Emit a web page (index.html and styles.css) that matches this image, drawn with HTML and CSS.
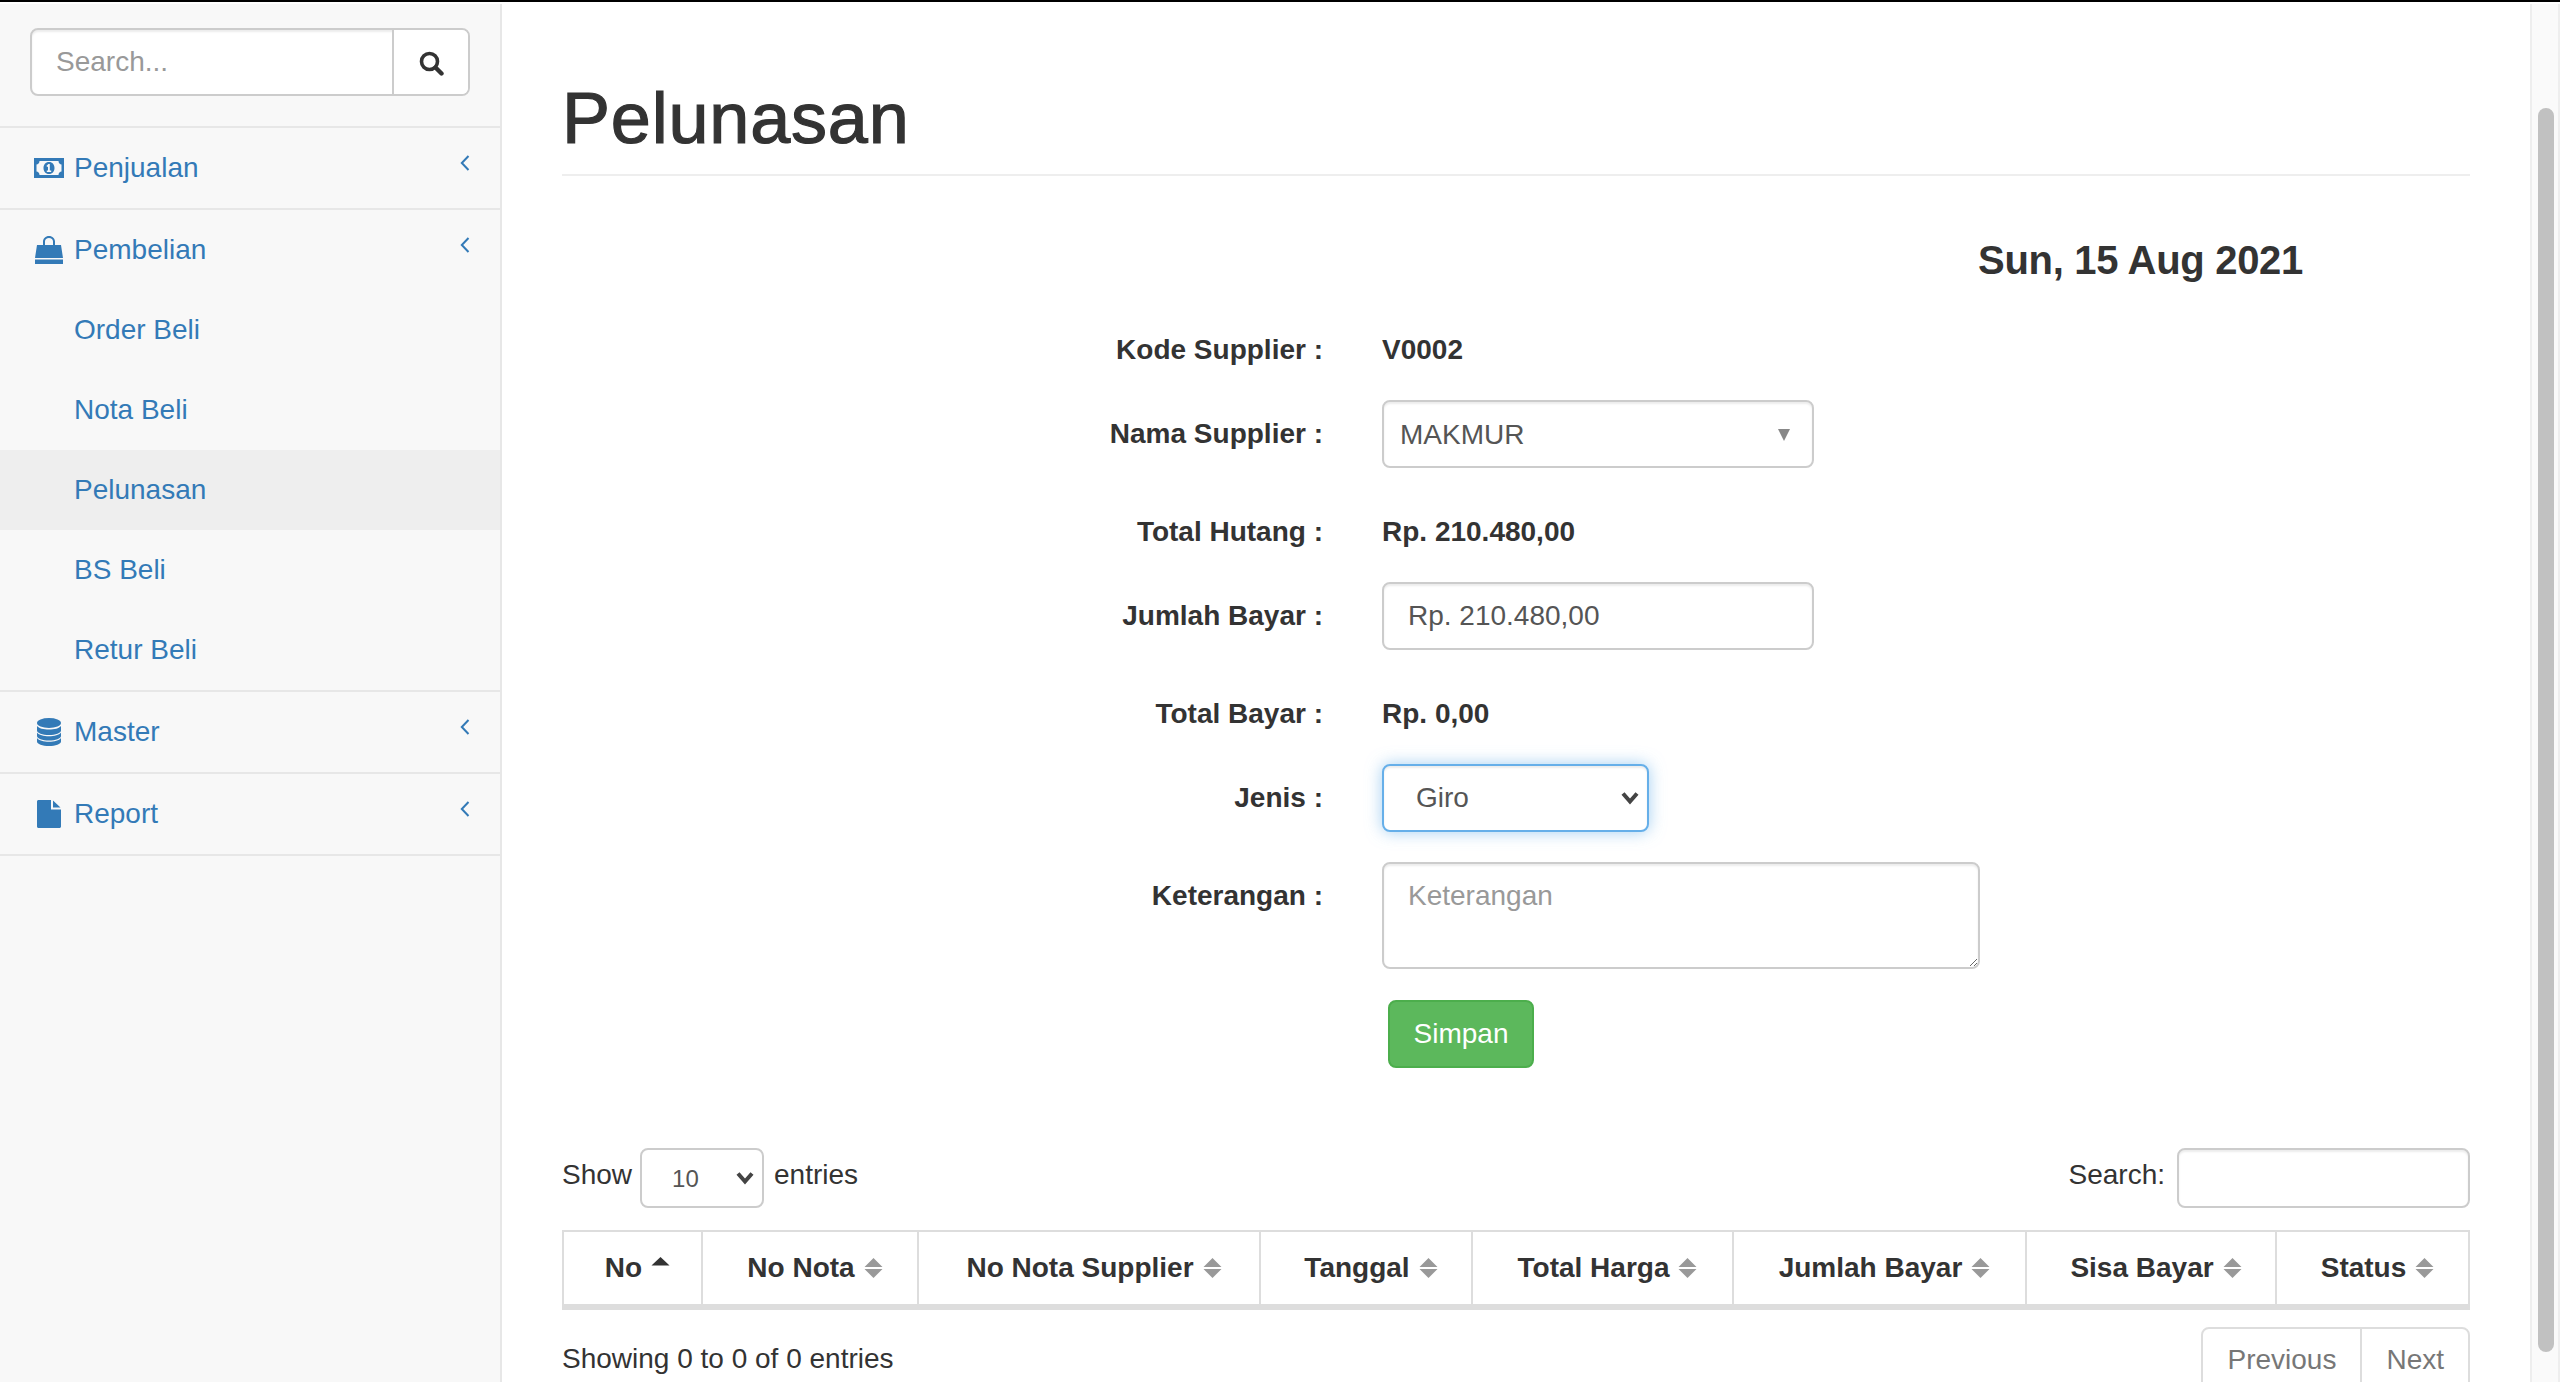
FILE: index.html
```html
<!DOCTYPE html>
<html lang="id">
<head>
    <meta charset="UTF-8">
    <meta name="viewport" content="width=device-width, initial-scale=1.0">
    <title>Pelunasan</title>
    <link rel="stylesheet" href="styles.css">
</head>
<body>
    <div class="wrapper">
        <aside class="sidebar">
            <div class="sidebar-search">
                <div class="search-group">
                    <input type="text" class="search-input" placeholder="Search...">
                    <button type="button" class="search-btn" aria-label="Search">
                        <svg width="26" height="26" viewBox="0 0 26 26"><circle cx="11.5" cy="11.5" r="8" fill="none" stroke="#333" stroke-width="3.6"/><path d="M17.5 17.5L23.5 23.5" stroke="#333" stroke-width="4.4" stroke-linecap="round"/></svg>
                    </button>
                </div>
            </div>
            <ul class="nav">
                <li class="nav-item">
                    <a class="nav-link">
                        <span class="nav-icon">
                            <svg width="30" height="20" viewBox="0 0 30 20"><path fill="#337ab7" fill-rule="evenodd" d="M0 0H30V20H0ZM5.5 3C5.5 5 4 6.5 2.5 6.5V13.500C4 13.500 5.500 15 5.500 17H24.500C24.500 15 26 13.500 27.500 13.500V6.500C26 6.500 24.500 5 24.500 3ZM15 4C18.500 4 20.500 6.700 20.500 10S18.500 16 15 16 9.500 13.300 9.500 10 11.500 4 15 4ZM15.800 6H14.400L12.400 8 13.400 9 14 8.400V12.500H12.800V14H17.200V12.500H15.800Z"/></svg>
                        </span>
                        <span class="nav-text">Penjualan</span>
                        <svg class="nav-arrow" width="10" height="16" viewBox="0 0 10 16"><path d="M8.500 1L1.800 8L8.500 15" fill="none" stroke="#337ab7" stroke-width="2"/></svg>
                    </a>
                </li>
                <li class="nav-item">
                    <a class="nav-link">
                        <span class="nav-icon">
                            <svg width="28" height="28" viewBox="0 0 28 28"><path fill="#337ab7" d="M2 9H8V5.500C8 2.500 10.500 0 14 0S20 2.500 20 5.500V9H26L28 22H0ZM10 9H18V5.500C18 3.500 16.300 2 14 2S10 3.500 10 5.500ZM0 23.500H28V28H0Z"/></svg>
                        </span>
                        <span class="nav-text">Pembelian</span>
                        <svg class="nav-arrow" width="10" height="16" viewBox="0 0 10 16"><path d="M8.500 1L1.800 8L8.500 15" fill="none" stroke="#337ab7" stroke-width="2"/></svg>
                    </a>
                    <ul class="subnav">
                        <li><a class="sub-link">Order Beli</a></li>
                        <li><a class="sub-link">Nota Beli</a></li>
                        <li><a class="sub-link active">Pelunasan</a></li>
                        <li><a class="sub-link">BS Beli</a></li>
                        <li><a class="sub-link">Retur Beli</a></li>
                    </ul>
                </li>
                <li class="nav-item">
                    <a class="nav-link">
                        <span class="nav-icon">
                            <svg width="24" height="28" viewBox="0 0 24 28"><ellipse cx="12" cy="5" rx="12" ry="5" fill="#337ab7"/><path fill="#337ab7" d="M0 8C2 10.500 6.500 11.500 12 11.500S22 10.500 24 8V12.500C24 15 18.500 17 12 17S0 15 0 12.500ZM0 14.500C2 17 6.500 18.200 12 18.200S22 17 24 14.500V18C24 20.500 18.500 22.500 12 22.500S0 20.500 0 18ZM0 20C2 22.500 6.500 23.800 12 23.800S22 22.500 24 20V23.500C24 26 18.500 28 12 28S0 26 0 23.500Z"/></svg>
                        </span>
                        <span class="nav-text">Master</span>
                        <svg class="nav-arrow" width="10" height="16" viewBox="0 0 10 16"><path d="M8.500 1L1.800 8L8.500 15" fill="none" stroke="#337ab7" stroke-width="2"/></svg>
                    </a>
                </li>
                <li class="nav-item">
                    <a class="nav-link">
                        <span class="nav-icon">
                            <svg width="24" height="28" viewBox="0 0 24 28"><path fill="#337ab7" d="M1.500 0H14V9.500H24V26.500C24 27.400 23.300 28 22.500 28H1.500C.7 28 0 27.400 0 26.500V1.500C0 .7.7 0 1.500 0ZM16 .5L23.500 7.500H16Z"/></svg>
                        </span>
                        <span class="nav-text">Report</span>
                        <svg class="nav-arrow" width="10" height="16" viewBox="0 0 10 16"><path d="M8.500 1L1.800 8L8.500 15" fill="none" stroke="#337ab7" stroke-width="2"/></svg>
                    </a>
                </li>
            </ul>
        </aside>

        <main class="page">
            <h1 class="page-header">Pelunasan</h1>
            <div class="date-row">Sun, 15 Aug 2021</div>

            <form class="pay-form">
                <div class="form-row form-row-static">
                    <label class="form-label">Kode Supplier :</label>
                    <div class="form-value">V0002</div>
                </div>
                <div class="form-row">
                    <label class="form-label">Nama Supplier :</label>
                    <div class="fake-select">
                        <span>MAKMUR</span>
                        <span class="fake-caret"></span>
                    </div>
                </div>
                <div class="form-row form-row-static">
                    <label class="form-label">Total Hutang :</label>
                    <div class="form-value">Rp. 210.480,00</div>
                </div>
                <div class="form-row">
                    <label class="form-label">Jumlah Bayar :</label>
                    <input type="text" class="form-control input-bayar" value="Rp. 210.480,00">
                </div>
                <div class="form-row form-row-static">
                    <label class="form-label">Total Bayar :</label>
                    <div class="form-value">Rp. 0,00</div>
                </div>
                <div class="form-row">
                    <label class="form-label">Jenis :</label>
                    <select class="form-control select-jenis">
                        <option>Giro</option>
                        <option>Tunai</option>
                    </select>
                </div>
                <div class="form-row form-row-text">
                    <label class="form-label">Keterangan :</label>
                    <textarea class="form-control text-keterangan" placeholder="Keterangan"></textarea>
                </div>
                <div class="form-row form-row-btn">
                    <button type="button" class="btn-simpan">Simpan</button>
                </div>
            </form>

            <div class="dt-top">
                <div class="dt-length">
                    <span>Show</span>
                    <select class="dt-select">
                        <option>10</option>
                        <option>25</option>
                    </select>
                    <span>entries</span>
                </div>
                <div class="dt-search">
                    <span>Search:</span>
                    <input type="search" class="dt-search-input">
                </div>
            </div>

            <table class="dt-table">
                <colgroup>
                    <col class="col-no">
                    <col class="col-nota">
                    <col class="col-supplier">
                    <col class="col-tanggal">
                    <col class="col-harga">
                    <col class="col-jumlah">
                    <col class="col-sisa">
                    <col class="col-status">
                </colgroup>
                <thead>
                    <tr>
                        <th><span class="th-inner">No<svg class="sort-icon" viewBox="0 0 19 22"><path fill="#333" d="M.5 8.500L9.500 0L18.500 8.500Z"/></svg></span></th>
                        <th><span class="th-inner">No Nota<svg class="sort-icon" viewBox="0 0 19 22"><path fill="#999" d="M.5 10L9.500 1L18.500 10ZM.5 12L9.500 21L18.500 12Z"/></svg></span></th>
                        <th><span class="th-inner">No Nota Supplier<svg class="sort-icon" viewBox="0 0 19 22"><path fill="#999" d="M.5 10L9.500 1L18.500 10ZM.5 12L9.500 21L18.500 12Z"/></svg></span></th>
                        <th><span class="th-inner">Tanggal<svg class="sort-icon" viewBox="0 0 19 22"><path fill="#999" d="M.5 10L9.500 1L18.500 10ZM.5 12L9.500 21L18.500 12Z"/></svg></span></th>
                        <th><span class="th-inner">Total Harga<svg class="sort-icon" viewBox="0 0 19 22"><path fill="#999" d="M.5 10L9.500 1L18.500 10ZM.5 12L9.500 21L18.500 12Z"/></svg></span></th>
                        <th><span class="th-inner">Jumlah Bayar<svg class="sort-icon" viewBox="0 0 19 22"><path fill="#999" d="M.5 10L9.500 1L18.500 10ZM.5 12L9.500 21L18.500 12Z"/></svg></span></th>
                        <th><span class="th-inner">Sisa Bayar<svg class="sort-icon" viewBox="0 0 19 22"><path fill="#999" d="M.5 10L9.500 1L18.500 10ZM.5 12L9.500 21L18.500 12Z"/></svg></span></th>
                        <th><span class="th-inner">Status<svg class="sort-icon" viewBox="0 0 19 22"><path fill="#999" d="M.5 10L9.500 1L18.500 10ZM.5 12L9.500 21L18.500 12Z"/></svg></span></th>
                    </tr>
                </thead>
            </table>

            <div class="dt-bottom">
                <div class="dt-info">Showing 0 to 0 of 0 entries</div>
                <ul class="pager">
                    <li class="pager-item">Previous</li>
                    <li class="pager-item">Next</li>
                </ul>
            </div>
        </main>

        <div class="scrollbar"><div class="scroll-thumb"></div></div>
    </div>
</body>
</html>
```

FILE: styles.css
```css
* {
    box-sizing: border-box;
}
html, body {
    height: 100%;
}
body {
    margin: 0;
    font-family: "Liberation Sans", Arial, sans-serif;
    font-size: 28px;
    line-height: 40px;
    color: #333;
    background-color: #fff;
    border-top: 2px solid #000;
    overflow: hidden;
}
ul {
    list-style: none;
    margin: 0;
    padding: 0;
}

.wrapper {
    display: flex;
    height: 1380px;
    padding-top: 2px;
    overflow: hidden;
}

/* sidebar */
.sidebar {
    flex: 0 0 502px;
    min-width: 0;
    background-color: #f8f8f8;
    border-right: 2px solid #e7e7e7;
}
.sidebar-search {
    padding: 24px 30px 30px;
    border-bottom: 2px solid #e7e7e7;
}
.search-group {
    display: flex;
    height: 68px;
    background-color: #fff;
    border: 2px solid #ccc;
    border-radius: 8px;
    box-shadow: inset 0 2px 2px rgba(0, 0, 0, .075);
}
.search-input {
    flex: 1;
    width: 0;
    min-width: 0;
    border: 0;
    outline: 0;
    background: none;
    padding: 0 24px;
    font: inherit;
    color: #555;
}
.search-input::placeholder {
    color: #999;
}
.search-btn {
    flex: 0 0 76px;
    border: 0;
    border-left: 2px solid #ccc;
    background-color: #fff;
    border-radius: 0 6px 6px 0;
    padding: 4px 0 0;
}
.nav-item {
    border-bottom: 2px solid #e7e7e7;
}
.nav-link {
    display: flex;
    align-items: center;
    height: 80px;
    padding: 0 30px;
    color: #337ab7;
}
.nav-icon {
    display: flex;
    justify-content: center;
    align-items: center;
    flex: 0 0 37px;
    height: 30px;
    margin-right: 7px;
}
.nav-text {
    flex: 1;
}
.nav-arrow {
    margin-bottom: 10px;
}
.sub-link {
    display: block;
    height: 80px;
    padding: 20px 30px 0 74px;
    color: #337ab7;
}
.sub-link.active {
    background-color: #eee;
}

/* main content */
.page {
    flex: 1;
    min-width: 0;
    padding: 0 60px;
}
.page-header {
    margin: 75px 0 0;
    padding-bottom: 16px;
    font-size: 72px;
    line-height: 79px;
    font-weight: 500;
    letter-spacing: .8px;
    -webkit-text-stroke: 1.2px #333;
    border-bottom: 2px solid #eee;
}
.date-row {
    margin: 60px 167px 32px 0;
    text-align: right;
    font-size: 40px;
    line-height: 48px;
    font-weight: bold;
    letter-spacing: -.3px;
}

.form-row {
    display: flex;
    margin-bottom: 30px;
}
.form-row-static {
    margin-bottom: 16px;
}
.form-row-text {
    margin-bottom: 31px;
}
.form-row-btn {
    padding-left: 826px;
    margin-bottom: 80px;
}
.form-label {
    flex: 0 0 761px;
    margin-right: 59px;
    padding-top: 14px;
    text-align: right;
    font-weight: bold;
}
.form-value {
    min-height: 68px;
    padding-top: 14px;
    font-weight: bold;
}
.form-control, .fake-select {
    height: 68px;
    background-color: #fff;
    border: 2px solid #ccc;
    border-radius: 8px;
    box-shadow: inset 0 2px 2px rgba(0, 0, 0, .075);
    font: inherit;
    color: #555;
}
.fake-select {
    display: flex;
    justify-content: space-between;
    align-items: center;
    width: 432px;
    padding: 2px 22px 0 16px;
}
.fake-caret {
    width: 0;
    height: 0;
    border-left: 6px solid transparent;
    border-right: 6px solid transparent;
    border-top: 12px solid #888;
}
.input-bayar {
    width: 432px;
    padding: 0 24px;
    outline: 0;
}
.select-jenis {
    width: 267px;
    padding: 0 24px 0 32px;
    border-color: #66afe9;
    outline: 0;
    appearance: none;
    background-image: url("data:image/svg+xml,%3Csvg xmlns='http://www.w3.org/2000/svg' width='18' height='14' viewBox='0 0 18 14'%3E%3Cpath d='M2 2.500L9 10.500L16 2.500' fill='none' stroke='%23444' stroke-width='4'/%3E%3C/svg%3E");
    background-repeat: no-repeat;
    background-position: right 8px center;
    box-shadow: inset 0 2px 2px rgba(0, 0, 0, .075), 0 0 16px rgba(102, 175, 233, .6);
}
.text-keterangan {
    display: block;
    width: 598px;
    height: 107px;
    padding: 12px 24px;
    outline: 0;
}
.text-keterangan::placeholder {
    color: #999;
}
.btn-simpan {
    width: 146px;
    height: 68px;
    padding: 0;
    font: inherit;
    color: #fff;
    background-color: #5cb85c;
    border: 2px solid #4cae4c;
    border-radius: 8px;
}

/* table controls */
.dt-top {
    display: flex;
    justify-content: space-between;
    margin-bottom: 22px;
}
.dt-length, .dt-search {
    display: flex;
    align-items: flex-start;
    line-height: 54px;
}
.dt-select {
    width: 124px;
    height: 60px;
    margin: 0 10px 0 8px;
    padding: 2px 12px 0 30px;
    font: inherit;
    font-size: 24px;
    color: #555;
    background-color: #fff;
    border: 2px solid #ccc;
    border-radius: 8px;
    outline: 0;
    appearance: none;
    background-image: url("data:image/svg+xml,%3Csvg xmlns='http://www.w3.org/2000/svg' width='18' height='14' viewBox='0 0 18 14'%3E%3Cpath d='M2 2.500L9 10.500L16 2.500' fill='none' stroke='%23444' stroke-width='4'/%3E%3C/svg%3E");
    background-repeat: no-repeat;
    background-position: right 8px center;
}
.dt-search-input {
    width: 293px;
    height: 60px;
    margin-left: 12px;
    border: 2px solid #ccc;
    border-radius: 8px;
    box-shadow: inset 0 2px 2px rgba(0, 0, 0, .075);
    outline: 0;
}

.dt-table {
    width: 1908px;
    table-layout: fixed;
    border-collapse: separate;
    border-spacing: 0;
}
.col-no { width: 141px; }
.col-nota { width: 216px; }
.col-supplier { width: 342px; }
.col-tanggal { width: 212px; }
.col-harga { width: 261px; }
.col-jumlah { width: 293px; }
.col-sisa { width: 250px; }
.col-status { width: 193px; }
.dt-table th {
    height: 80px;
    padding: 0 0 0 10px;
    text-align: center;
    font-weight: bold;
    border-top: 2px solid #ddd;
    border-right: 2px solid #ddd;
    border-bottom: 6px solid #ddd;
}
.dt-table th:first-child {
    border-left: 2px solid #ddd;
}
.th-inner {
    display: inline-flex;
    align-items: center;
}
.sort-icon {
    width: 19px;
    height: 22px;
    margin-left: 9px;
}

.dt-bottom {
    display: flex;
    justify-content: space-between;
    margin-top: 17px;
}
.dt-info {
    padding-top: 12px;
}
.pager {
    display: flex;
}
.pager-item {
    height: 68px;
    padding: 11px 24px;
    color: #777;
    border: 2px solid #ddd;
    margin-left: -2px;
}
.pager-item:first-child {
    border-radius: 8px 0 0 0;
}
.pager-item:last-child {
    border-radius: 0 8px 0 0;
}

/* scrollbar column */
.scrollbar {
    flex: 0 0 30px;
    padding: 104px 4px 0 6px;
    background-color: #fafafa;
    border-left: 2px solid #eee;
    border-right: 2px solid #eee;
}
.scroll-thumb {
    width: 16px;
    height: 1244px;
    background-color: #c1c1c1;
    border-radius: 8px;
}
```
